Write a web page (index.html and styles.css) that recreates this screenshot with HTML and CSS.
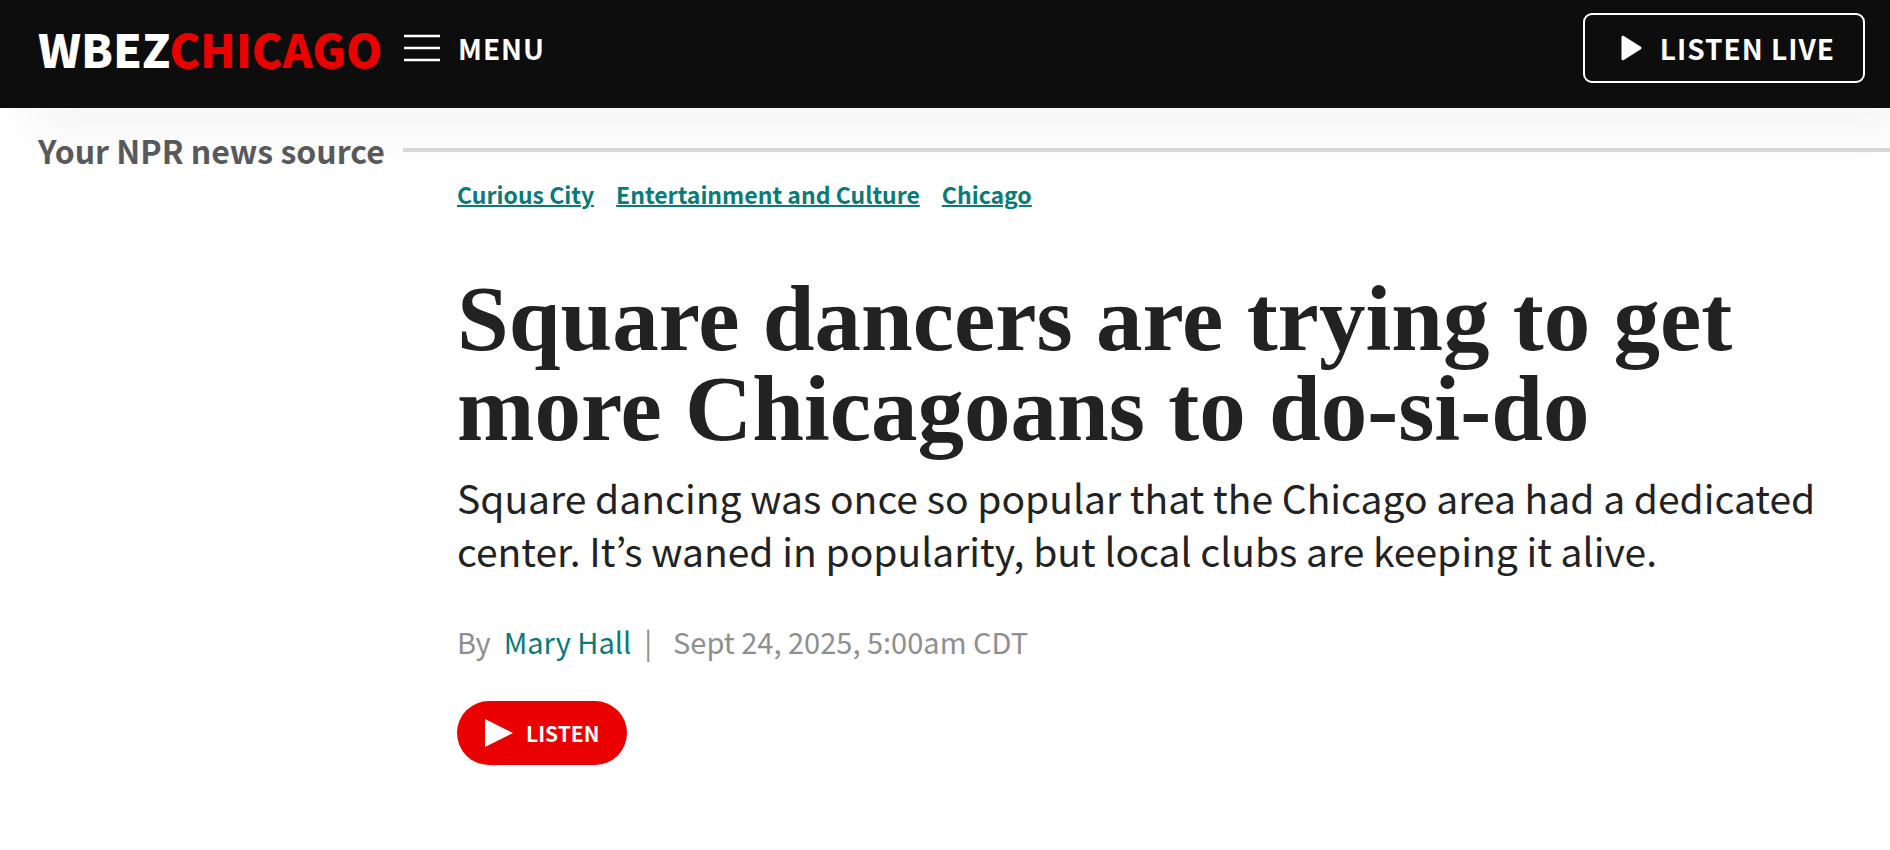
FILE: index.html
```html
<!DOCTYPE html>
<html lang="en">
<head>
<meta charset="UTF-8">
<meta name="viewport" content="width=device-width, initial-scale=1.0">
<title>Square dancers are trying to get more Chicagoans to do-si-do</title>
<link rel="stylesheet" href="styles.css">
</head>
<body>

<header class="header">
    <a class="logo" href="#">WBEZ<span class="logo-city">CHICAGO</span></a>
    <button class="menu" type="button">
        <svg class="menu-icon" viewBox="0 0 36 28" aria-hidden="true">
            <path d="M0 2h36M0 14h36M0 26h36" stroke="#fff" stroke-width="2.4"/>
        </svg>
        MENU
    </button>
    <button class="listen-live" type="button">
        <svg class="live-icon" viewBox="0 0 21 26" aria-hidden="true">
            <path d="M2 2.2v21.6L19 13z" fill="#fff" stroke="#fff" stroke-width="3" stroke-linejoin="round"/>
        </svg>
        LISTEN LIVE
    </button>
</header>

<div class="tagline">
    <span>Your NPR news source</span>
    <hr>
</div>

<main class="article">
    <nav class="tags">
        <a href="#">Curious City</a>
        <a href="#">Entertainment and Culture</a>
        <a href="#">Chicago</a>
    </nav>
    <h1>Square dancers are trying to get more Chicagoans to do-si-do</h1>
    <p class="deck">Square dancing was once so popular that the Chicago area had a dedicated center. It’s waned in popularity, but local clubs are keeping it alive.</p>
    <div class="byline">
        <span>By</span>
        <a href="#">Mary Hall</a>
        <span>|</span>
        <time datetime="2025-09-24T05:00">Sept 24, 2025, 5:00am CDT</time>
    </div>
    <button class="listen" type="button">
        <svg class="listen-icon" viewBox="0 0 28 28" aria-hidden="true">
            <path d="M0 0l28 14L0 28z" fill="#fff"/>
        </svg>
        LISTEN
    </button>
</main>

</body>
</html>
```
FILE: styles.css
```css
* {
    box-sizing: border-box;
}

body {
    margin: 0;
    background-color: #fff;
    color: #222;
    font-family: "Noto Sans CJK JP", "Open Sans", sans-serif;
}

button {
    display: flex;
    align-items: center;
    border: 0;
    padding: 0;
    background: none;
    color: #fff;
    font-family: inherit;
    font-weight: bold;
    cursor: pointer;
}

/* top bar */
.header {
    display: flex;
    align-items: center;
    height: 108px;
    padding: 0 25px 12px 38px;
    background-color: #0d0d0d;
    box-shadow: 25px 25px 60px -5px rgba(0, 0, 0, 0.05);
}

.logo {
    width: 366px;
    color: #fff;
    font-size: 46px;
    font-weight: 900;
    line-height: 72px;
    text-decoration: none;
    white-space: nowrap;
}

.logo-city {
    color: #eb0000;
}

.menu {
    gap: 18px;
    font-size: 28px;
    letter-spacing: 1px;
}

.menu-icon {
    width: 36px;
    height: 28px;
}

.listen-live {
    gap: 18px;
    height: 70px;
    margin-left: auto;
    padding: 0 28px 0 36px;
    border: 2px solid #fff;
    border-radius: 9px;
    font-size: 28px;
    letter-spacing: 1px;
}

.live-icon {
    width: 21px;
    height: 26px;
}

.tagline {
    display: flex;
    align-items: center;
    gap: 18px;
    height: 52px;
    margin-top: 16px;
    padding-left: 38px;
    color: #58595b;
    font-size: 32px;
    font-weight: bold;
    line-height: 52px;
}

.tagline hr {
    flex: 1;
    height: 4px;
    margin: 0;
    border: 0;
    background-color: #d7d7d7;
}

/* story heading */
.article {
    padding: 0 40px 0 457px;
}

.tags {
    display: flex;
    gap: 22px;
    font-size: 23px;
    font-weight: bold;
    line-height: 36px;
}

.tags a {
    color: #087a78;
    text-decoration-thickness: 2px;
}

h1 {
    margin: 62px 0 0;
    font-family: "Liberation Serif", serif;
    font-size: 93px;
    line-height: 90px;
}

.deck {
    margin: 17px 0 0;
    font-size: 39px;
    line-height: 53px;
}

.byline {
    display: flex;
    gap: 13px;
    margin-top: 44px;
    color: #8f8f8f;
    font-size: 29px;
    line-height: 40px;
}

.byline a {
    color: #087a78;
    text-decoration: none;
}

.byline time {
    margin-left: 8px;
}

.listen {
    gap: 13px;
    height: 64px;
    margin-top: 40px;
    padding: 0 28px;
    border-radius: 32px;
    background-color: #eb0000;
    font-size: 21px;
}

.listen-icon {
    width: 28px;
    height: 28px;
}
```
